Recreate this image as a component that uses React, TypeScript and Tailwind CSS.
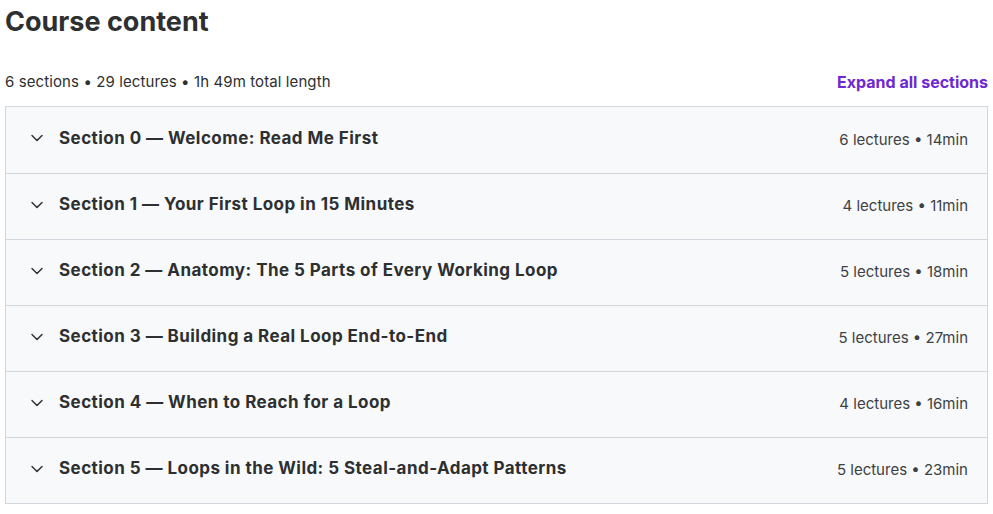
import { ChevronDown } from "lucide-react";

const sections = [
  { title: "Section 0 — Welcome: Read Me First", lectures: 6, length: "14min" },
  { title: "Section 1 — Your First Loop in 15 Minutes", lectures: 4, length: "11min" },
  { title: "Section 2 — Anatomy: The 5 Parts of Every Working Loop", lectures: 5, length: "18min" },
  { title: "Section 3 — Building a Real Loop End-to-End", lectures: 5, length: "27min" },
  { title: "Section 4 — When to Reach for a Loop", lectures: 4, length: "16min" },
  { title: "Section 5 — Loops in the Wild: 5 Steal-and-Adapt Patterns", lectures: 5, length: "23min" },
];

const App = () => {
  return (
    <div className="bg-white px-[5px] pt-[3px] text-[#2d2f31]" style={{ fontFamily: "Inter, 'Noto Sans', sans-serif" }}>
      <h2 className="text-[27px] font-bold leading-[38px]">Course content</h2>

      <div className="mt-[31px] flex items-center justify-between leading-[20px]">
        <span className="text-[15px] tracking-[0.1px]">6 sections • 29 lectures • 1h 49m total length</span>
        <button className="text-[16px] font-bold text-[#6d28d2]">Expand all sections</button>
      </div>

      <div className="mt-[14px] border border-[#d1d7dc]">
        {sections.map((section, i) => (
          <div
            key={i}
            className={`flex h-[66px] items-center bg-[#f7f9fa] pl-[21px] pr-[19px] ${i > 0 ? "border-t border-[#d1d7dc]" : ""}`}
          >
            <ChevronDown size={20} strokeWidth={1.7} className="mb-[4px] mr-[12px] shrink-0 text-[#2d2f31]" />
            <span className="flex-1 pb-[3px] text-[17px] font-bold tracking-[0.45px]">{section.title}</span>
            <span className="text-[15px] text-[#3e4143]">
              {section.lectures} lectures • {section.length}
            </span>
          </div>
        ))}
      </div>
    </div>
  );
};

export default App;
